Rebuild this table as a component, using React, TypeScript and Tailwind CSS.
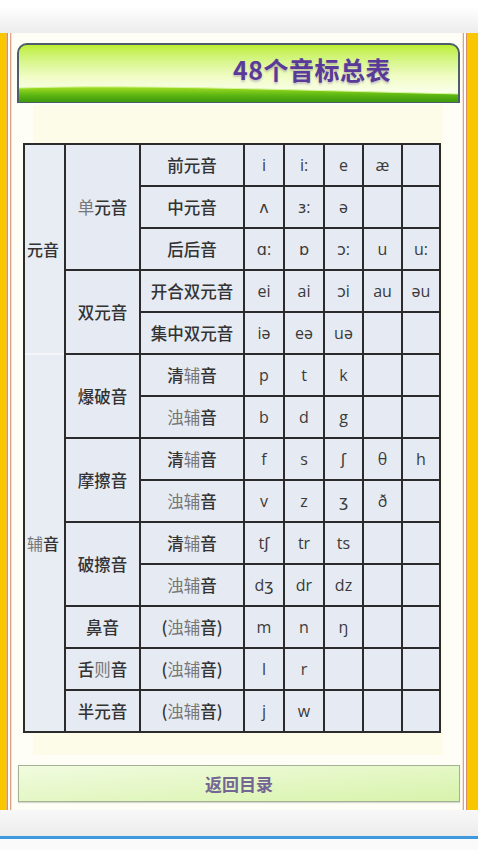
import React from 'react'

const cjk = "font-['Noto_Sans_CJK_SC','Noto_Sans',sans-serif]"
const ipa = "font-['Open_Sans','DejaVu_Sans',sans-serif]"

type Row = { label: React.ReactNode; sounds: string[] }

const soft = (t: string) => <span className="font-normal text-[#777]">{t}</span>

const rows: Row[] = [
  { label: '前元音', sounds: ['i', 'i:', 'e', 'æ', ''] },
  { label: '中元音', sounds: ['ʌ', 'ɜ:', 'ə', '', ''] },
  { label: '后后音', sounds: ['ɑ:', 'ɒ', 'ɔ:', 'u', 'u:'] },
  { label: '开合双元音', sounds: ['ei', 'ai', 'ɔi', 'au', 'əu'] },
  { label: '集中双元音', sounds: ['iə', 'eə', 'uə', '', ''] },
  { label: <>清{soft('辅')}音</>, sounds: ['p', 't', 'k', '', ''] },
  { label: <>{soft('浊辅')}音</>, sounds: ['b', 'd', 'g', '', ''] },
  { label: <>清{soft('辅')}音</>, sounds: ['f', 's', 'ʃ', 'θ', 'h'] },
  { label: <>{soft('浊辅')}音</>, sounds: ['v', 'z', 'ʒ', 'ð', ''] },
  { label: <>清{soft('辅')}音</>, sounds: ['tʃ', 'tr', 'ts', '', ''] },
  { label: <>{soft('浊辅')}音</>, sounds: ['dʒ', 'dr', 'dz', '', ''] },
  { label: <>({soft('浊辅')}音)</>, sounds: ['m', 'n', 'ŋ', '', ''] },
  { label: <>({soft('浊辅')}音)</>, sounds: ['l', 'r', '', '', ''] },
  { label: <>({soft('浊辅')}音)</>, sounds: ['j', 'w', '', '', ''] },
]

// column 2 groups, in row order; key = first row index
const groups: Record<number, { label: React.ReactNode; span: string }> = {
  0: { label: <>{soft('单')}元音</>, span: 'row-span-3' },
  3: { label: '双元音', span: 'row-span-2' },
  5: { label: '爆破音', span: 'row-span-2' },
  7: { label: '摩擦音', span: 'row-span-2' },
  9: { label: '破擦音', span: 'row-span-2' },
  11: { label: '鼻音', span: 'row-span-1' },
  12: { label: <>舌{soft('则')}音</>, span: 'row-span-1' },
  13: { label: '半元音', span: 'row-span-1' },
}

function SideEdge({ side }: { side: 'left' | 'right' }) {
  if (side === 'left') {
    return (
      <div className="flex h-full shrink-0">
        <div className="w-[6px] bg-[#f8c700]" />
        <div className="w-[1px] bg-[#f2b45a]" />
        <div className="w-[1px] bg-[#d9916a]" />
        <div className="w-[2px] bg-white" />
        <div className="w-[1px] bg-[#dfa086]" />
        <div className="w-[1px] bg-[#f3e2d6]" />
      </div>
    )
  }
  return (
    <div className="flex h-full shrink-0">
      <div className="w-[1px] bg-[#f3e2d6]" />
      <div className="w-[1px] bg-[#dfa086]" />
      <div className="w-[2px] bg-white" />
      <div className="w-[1px] bg-[#d9916a]" />
      <div className="w-[1px] bg-[#f2b45a]" />
      <div className="w-[10px] bg-[#f8c700]" />
    </div>
  )
}

function Header() {
  return (
    <div className="relative ml-[5px] mt-[10px] h-[60px] w-[443px] overflow-hidden rounded-t-[10px] border-2 border-b-[1.5px] border-[#4d5d6b] bg-gradient-to-b from-[#bdee2e] via-[#f0fcc4] via-55% to-white">
      <svg className="absolute bottom-0 left-0" width="443" height="17" viewBox="0 0 443 17" preserveAspectRatio="none">
        <defs>
          <linearGradient id="wave" x1="0" y1="0" x2="0" y2="1">
            <stop offset="0" stopColor="#a6e024" />
            <stop offset="0.55" stopColor="#5cb612" />
            <stop offset="1" stopColor="#3e9a0c" />
          </linearGradient>
        </defs>
        <path d="M0 3 C 120 -1, 300 6, 443 9 L 443 17 L 0 17 Z" fill="url(#wave)" />
        <path d="M0 3 C 120 -1, 300 6, 443 9" stroke="#d6f59a" strokeWidth="1" fill="none" />
      </svg>
      <div className="relative flex h-[50px] items-center pl-[214px]">
        <span
          className={`${cjk} text-[25px] font-bold tracking-[0.5px] text-[#5a3a98] [text-shadow:0_2px_2px_rgba(120,90,170,0.35)]`}
        >
          48个音标总表
        </span>
      </div>
    </div>
  )
}

function PhoneticTable() {
  const cell = 'flex items-center justify-center bg-[#e6eaf2]'
  return (
    <div className="ml-[11px] mt-[40px] w-[418px] bg-[#2b2b2b] p-[2px]">
      <div className="grid grid-cols-[39px_73px_102px_38px_38px_37px_37px_36px] grid-rows-[repeat(14,40px)] gap-[2px]">
        <div className={`row-span-14 flex flex-col bg-[#e8ecf3] ${cjk} text-[16px] font-medium text-[#333]`}>
          <div className="flex h-[208px] items-center pl-[2px]">元音</div>
          <div className="h-[2px] bg-[#f4f6fa]" />
          <div className="flex flex-1 items-center pl-[2px]">{soft('辅')}音</div>
        </div>
        {rows.map((r, i) => (
          <React.Fragment key={i}>
            {groups[i] && (
              <div className={`${groups[i].span} ${cell} ${cjk} text-[16.5px] font-medium text-[#333]`}>
                {groups[i].label}
              </div>
            )}
            <div className={`${cell} ${cjk} text-[16.5px] font-medium text-[#333]`}>{r.label}</div>
            {r.sounds.map((s, j) => (
              <div key={j} className={`${cell} ${ipa} text-[16px] text-[#3a3a3a]`}>
                {s}
              </div>
            ))}
          </React.Fragment>
        ))}
      </div>
    </div>
  )
}

export default function App() {
  return (
    <div className="flex h-[850px] w-[478px] flex-col overflow-hidden bg-white">
      <div className="h-[33px] shrink-0 bg-gradient-to-b from-white from-20% to-[#ececec]" />
      <div className="flex h-[777px] shrink-0">
        <SideEdge side="left" />
        <div className="relative flex w-[450px] flex-col bg-[#fefef7]">
          <div className="absolute left-[21px] top-[72px] h-[650px] w-[410px] bg-[#fcfce9]" />
          <div className="relative flex flex-col">
            <Header />
            <PhoneticTable />
            <button className="ml-[6px] mt-[32px] flex h-[37px] w-[442px] items-center justify-center border border-[#a3b294] bg-gradient-to-br from-[#f1fbdf] to-[#d8f3ab] shadow-[0_1px_1px_rgba(0,0,0,0.15)]">
              <span className={`${cjk} text-[17px] font-bold text-[#746594]`}>返回目录</span>
            </button>
          </div>
        </div>
        <SideEdge side="right" />
      </div>
      <div className="h-[26px] shrink-0 bg-gradient-to-b from-[#f8f8f8] to-[#ececec]" />
      <div className="h-[3px] shrink-0 bg-[#3f99df]" />
      <div className="flex-1 bg-[#fafafa]" />
    </div>
  )
}
